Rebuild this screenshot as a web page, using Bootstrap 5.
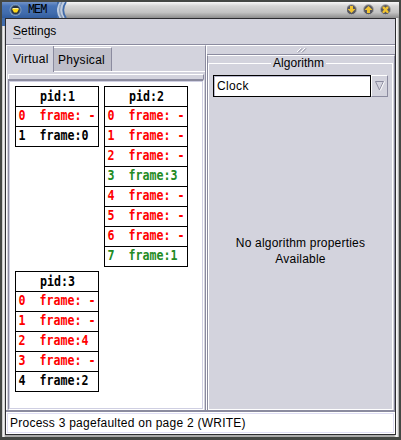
<!DOCTYPE html>
<html lang="en">
<head>
<meta charset="utf-8">
<title>MEM</title>
<link href="https://cdn.jsdelivr.net/npm/bootstrap@5.3.0/dist/css/bootstrap.min.css" rel="stylesheet">
<style>
body{width:401px;height:440px;overflow:hidden;background:#444744;color:#000;font:12px/16px "Liberation Sans",Arial,sans-serif;letter-spacing:.25px}
.frame{width:401px;height:440px;padding:2px 2px 3px 2px}
.chrome{height:435px;background:linear-gradient(90deg,#bbb 0,#fff 2px,#aaa 3px,#aaa 392px,#eee 394px,#fff 395px,#999 397px);position:relative}
.titlebar{height:16px;background:linear-gradient(#f8f8f8,#d5d5d5 25%,#c3c3c3 65%,#8d8d8d)}
.title-left{width:55px;height:16px;padding-left:6px;background:linear-gradient(#7394c8,#4874b8 25%,#416cac 70%,#315c9e)}
.title-name{font:12px/16px "Liberation Mono",monospace;letter-spacing:-1.1px;margin-left:6px;transform:scaleY(1.14)}
.side-blue{position:absolute;left:0;top:16px;width:3px;height:8px;background:#416cac}
.win{margin:0 3px 0 3px;border:1px solid #2c2c30;height:417px;background:#d3d3dd}
.menubar{height:26px;border-bottom:1px solid #8b8b9f;padding:4px 0 0 7px;letter-spacing:0}
.menubar u{text-underline-offset:3px;text-decoration-color:#8b8b9f}
.left-pane{width:200px;border-top:1px solid #fff;border-left:1px solid #fff;border-right:1px solid #8b8b9f}
.tabs{height:26px}
.tab1{width:47px;padding:5px 0 0 6px;border-right:1px solid #8b8b9f}
.tab2{width:58px;margin-top:1px;height:24px;padding:4px 0 0 4px;background:#bfbfca;border-top:1px solid #fff;border-right:1px solid #8b8b9f;letter-spacing:.3px}
.tabfill{border-bottom:1px solid #fff}
.strip{height:5px;margin:2px 1px 0;background:#d3d3dd;border:1px solid #fff;border-right-color:#8b8b9f;border-bottom:0}
.canvas{height:331px;margin:0 1px;border:1px solid #8b8b9f;border-top-width:2px;border-right-color:#fff;border-bottom-color:#fff}
.canvas-in{height:328px;border:1px solid #cfcfe2;background:#fff;padding:4px 0 0 5px}
.grid{display:grid;grid-template-columns:84px 84px;column-gap:5px;row-gap:4px;align-items:start}
.proc{border:1px solid #000;font:bold 11.63px/19px "DejaVu Sans Mono",monospace;letter-spacing:0}
.proc>div{height:20px;padding-left:2.5px;white-space:pre;border-top:1px solid #000}
.proc>div:first-child{height:19px;border:0;padding:1px 0 0 24px}
.proc span{display:block;height:19px;transform:scaleY(1.14)}
.red{color:#f00}.green{color:#228b22}
.right-pane{width:189px;border-left:1px solid #fff;border-top:1px solid #fff}
.grip{height:9px;border-bottom:1px solid #8b8b9f;padding-left:89px}
.grip svg{display:block}
.group{height:355px;border-top:1px solid #fff;border-left:1px solid #8b8b9f;border-right:1px solid #8b8b9f}
.prop{margin:7px 1px 0 0;height:347px;border:1px solid #fff}
.legend{height:11px;margin-top:-7px;line-height:13px}
.legend span{background:#d3d3dd;padding:0 2px;margin-right:4px;height:13px;letter-spacing:.03px}
.combo{margin:7px 4px 0 4px;height:22px}
.combo-text{width:158px;border:1px solid #000;background:#fff;padding:2px 0 0 3px;letter-spacing:.35px;box-shadow:inset 1px 1px #b8b8cc}
.combo-btn{width:17px;border:1px solid #8b8b9f;border-left-color:#fff;border-top-color:#fff}
.empty{margin-top:138px;letter-spacing:.2px}
.status{height:24px;border-top:2px solid #8b8b9f;background:#fff;padding:1px}
.status>div{border:1px solid #e0dff5;height:20px;padding:1px 0 0 2px}
</style>
<script src="https://cdn.jsdelivr.net/npm/bootstrap@5.3.0/dist/js/bootstrap.bundle.min.js"></script>
</head>
<body>
<div class="frame">
<div class="chrome">
<div class="titlebar d-flex justify-content-between">
<div class="d-flex">
<div class="title-left d-flex"><svg width="14" height="16" viewBox="0 0 14 16"><circle cx="7.5" cy="8" r="6" fill="#7f9dc4"/><circle cx="7.5" cy="8" r="4.7" fill="#273344" stroke="#56718f"/><path d="M4 7H11L9 10.5H6Z" fill="#ffd91a"/><path d="M4.5 6.5H10.5" stroke="#fff2a0"/></svg><span class="title-name">MEM</span></div>
<svg width="12" height="16" viewBox="0 0 12 16"><path d="M0 0H5Q-2 8 3 16H0Z" fill="#416cac"/><path d="M3.5 0Q-2 8 3.5 16M7 0Q1.5 8 7 16" fill="none" stroke="#bdcce2" stroke-width="1.6"/><path d="M5.3 0Q-.2 8 5.3 16" fill="none" stroke="#8199bd" stroke-width="1.2"/><path d="M9 0Q3.5 8 9 16" fill="none" stroke="#416cac" stroke-width="1.8"/></svg>
</div>
<svg width="52" height="16" viewBox="0 0 52 16"><g fill="#56575f" stroke="#aaa"><circle cx="4.5" cy="7.7" r="5"/><circle cx="21.5" cy="7.7" r="5"/><circle cx="38.5" cy="7.7" r="5"/></g><g fill="#f0c330"><path d="M3 4H6V7H8.5L4.5 11L.5 7H3Z"/><path d="M20 11H23V8H25.5L21.5 4L17.5 8H20Z"/><path d="M35.5 4.5H37.2L38.5 5.8L39.8 4.5H41.5V6.2L40 7.7L41.5 9.2V11H39.8L38.5 9.6L37.2 11H35.5V9.2L37 7.7L35.5 6.2Z"/></g></svg>
</div>
<div class="side-blue"></div>
<div class="win">
<div class="menubar"><u>S</u>ettings</div>
<div class="d-flex">
<div class="left-pane">
<div class="tabs d-flex"><div class="tab1">Virtual</div><div class="d-flex flex-fill tabfill"><div class="tab2">Physical</div></div></div>
<div class="strip"></div>
<div class="canvas"><div class="canvas-in"><div class="grid">
<div class="proc"><div><span>pid:1</span></div><div class="red"><span>0  frame: -</span></div><div><span>1  frame:0</span></div></div>
<div class="proc"><div><span>pid:2</span></div><div class="red"><span>0  frame: -</span></div><div class="red"><span>1  frame: -</span></div><div class="red"><span>2  frame: -</span></div><div class="green"><span>3  frame:3</span></div><div class="red"><span>4  frame: -</span></div><div class="red"><span>5  frame: -</span></div><div class="red"><span>6  frame: -</span></div><div class="green"><span>7  frame:1</span></div></div>
<div class="proc"><div><span>pid:3</span></div><div class="red"><span>0  frame: -</span></div><div class="red"><span>1  frame: -</span></div><div class="red"><span>2  frame:4</span></div><div class="red"><span>3  frame: -</span></div><div><span>4  frame:2</span></div></div>
</div></div></div>
</div>
<div class="right-pane">
<div class="grip"><svg width="14" height="8"><path d="M1 6L5 2M5 6L9 2" stroke="#fff"/><path d="M2 6.5L6 2.5M6 6.5L10 2.5" stroke="#8b8b9f"/></svg></div>
<div class="group"><div class="prop">
<div class="legend text-center"><span class="d-inline-block">Algorithm</span></div>
<div class="combo d-flex"><div class="combo-text">Clock</div><div class="combo-btn"><svg class="d-block" width="15" height="20"><path d="M3.5 5.5H11.5L7.5 14Z" fill="none" stroke="#8b8b9f"/><path d="M8.3 14.5L12.5 5.5" stroke="#fff"/></svg></div></div>
<div class="empty text-center">No algorithm properties<br>Available</div>
</div></div>
</div>
</div>
<div class="status"><div>Process 3 pagefaulted on page 2 (WRITE)</div></div>
</div>
</div>
</div>
</body>
</html>
